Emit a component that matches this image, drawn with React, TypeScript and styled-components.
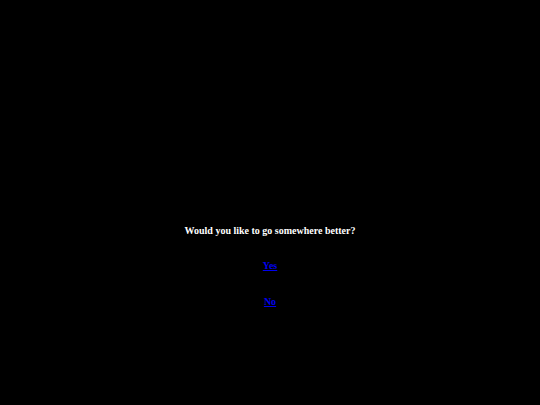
import styled, { createGlobalStyle } from "styled-components"

const GlobalStyle = createGlobalStyle`
  html, body {
    margin: 0;
    padding: 0;
    background-color: #000000;
  }
  body {
    font-family: "Liberation Serif", "Times New Roman", serif;
  }
`

export default function App() {
  return (
    <>
      <GlobalStyle />
      <Page>
        <Question>Would you like to go somewhere better?</Question>
        <Choice href="#">Yes</Choice>
        <Choice href="#">No</Choice>
      </Page>
    </>
  )
}

const Page = styled.main`
  width: 540px;
  height: 405px;
  box-sizing: border-box;
  padding-top: 224px;
  display: flex;
  flex-direction: column;
  align-items: center;
  background-color: #000000;
`

const Question = styled.h1`
  margin: 0 0 21px;
  font-size: 10px;
  line-height: 14px;
  font-weight: 700;
  color: #ffffff;
`

const Choice = styled.a`
  margin-bottom: 22px;
  font-size: 10px;
  line-height: 14px;
  font-weight: 700;
  color: #0000ee;
  text-decoration: underline;
`
